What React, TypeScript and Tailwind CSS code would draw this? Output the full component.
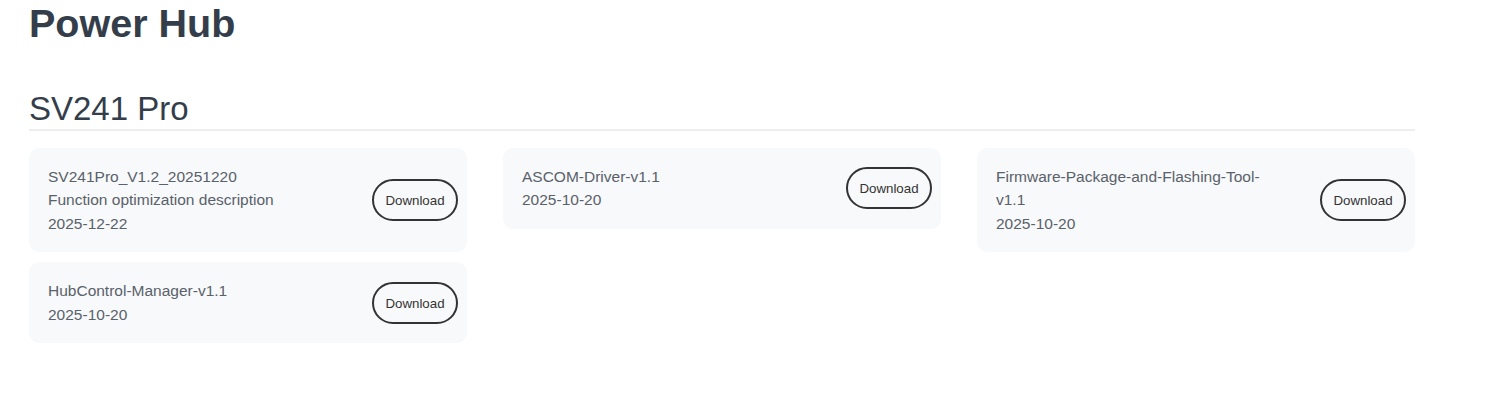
const FILES = [
  { name: 'SV241Pro_V1.2_20251220', desc: 'Function optimization description', date: '2025-12-22' },
  { name: 'ASCOM-Driver-v1.1', date: '2025-10-20' },
  { name: 'Firmware-Package-and-Flashing-Tool-v1.1', date: '2025-10-20' },
  { name: 'HubControl-Manager-v1.1', date: '2025-10-20' },
];

function FileCard({ name, desc, date }: { name: string; desc?: string; date: string }) {
  return (
    <div className="flex items-center justify-between rounded-[10px] bg-[#f8f9fa] py-[17px] pl-[19px] pr-[9px]">
      <div className="max-w-[275px] text-[15.5px] leading-[23.5px] text-[#59616b]">
        <div>{name}</div>
        {desc && <div>{desc}</div>}
        <div>{date}</div>
      </div>
      <button className="flex h-[42px] w-[86px] shrink-0 items-center justify-center rounded-full border-2 border-[#333] pt-px text-[13.3px] text-[#333]">
        Download
      </button>
    </div>
  );
}

export default function App() {
  return (
    <div className="min-h-screen bg-white font-['Liberation_Sans',Arial,sans-serif]">
      <div className="ml-[29px] w-[1386px]">
        <h1 className="text-[39.5px] font-bold leading-[1.2] text-[#343e4b]">Power Hub</h1>
        <h2 className="mt-[42px] border-b-2 border-[#eeeeee] text-[33px] leading-[1.2] text-[#343e4b]">
          SV241 Pro
        </h2>
        <div className="mt-[17px] grid grid-cols-3 items-start gap-x-[36px] gap-y-[10px]">
          {FILES.map((f) => (
            <FileCard key={f.name} {...f} />
          ))}
        </div>
      </div>
    </div>
  );
}
